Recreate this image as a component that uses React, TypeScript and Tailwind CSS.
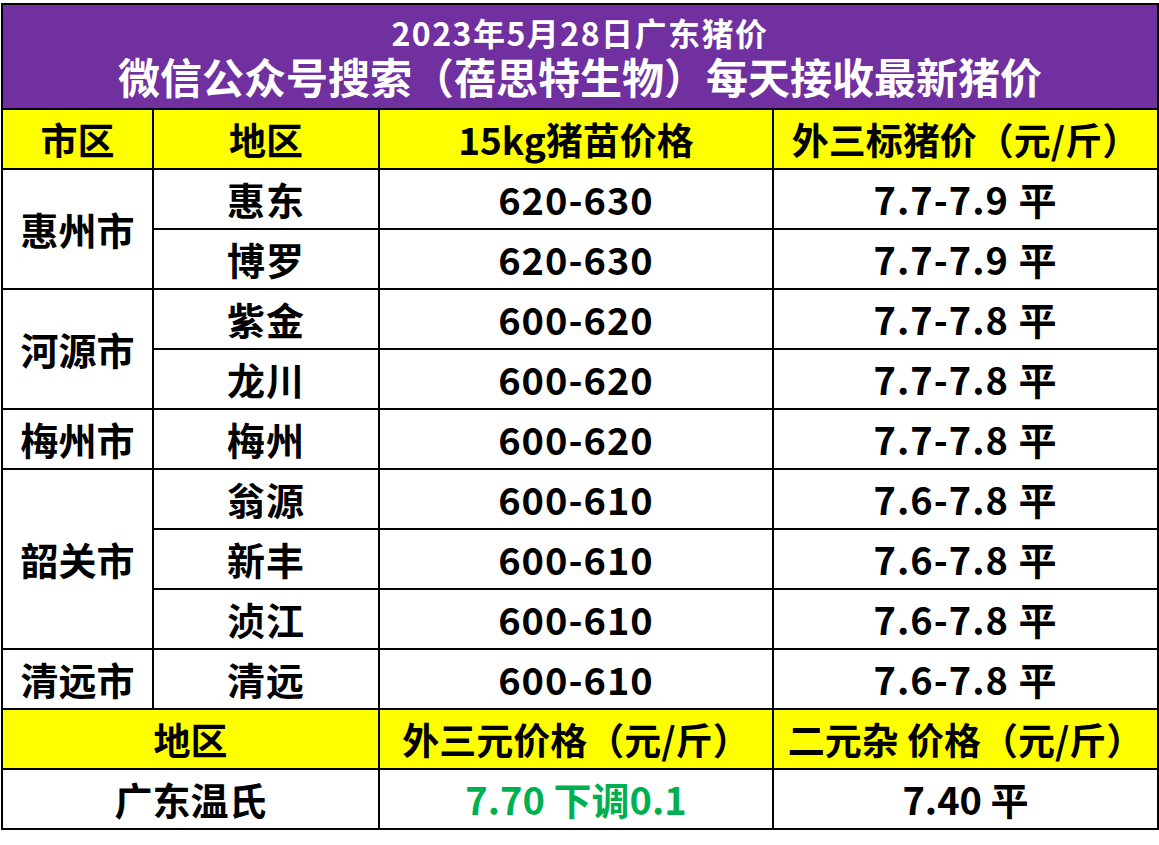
import React from "react";

const font = { fontFamily: '"Noto Sans CJK SC", "Noto Sans", sans-serif' };

const rows: { city?: string; span?: number; area: string; seed: string; price: string }[] = [
  { city: "惠州市", span: 2, area: "惠东", seed: "620-630", price: "7.7-7.9 平" },
  { area: "博罗", seed: "620-630", price: "7.7-7.9 平" },
  { city: "河源市", span: 2, area: "紫金", seed: "600-620", price: "7.7-7.8 平" },
  { area: "龙川", seed: "600-620", price: "7.7-7.8 平" },
  { city: "梅州市", span: 1, area: "梅州", seed: "600-620", price: "7.7-7.8 平" },
  { city: "韶关市", span: 3, area: "翁源", seed: "600-610", price: "7.6-7.8 平" },
  { area: "新丰", seed: "600-610", price: "7.6-7.8 平" },
  { area: "浈江", seed: "600-610", price: "7.6-7.8 平" },
  { city: "清远市", span: 1, area: "清远", seed: "600-610", price: "7.6-7.8 平" },
];

const td = "border-2 border-black text-center align-middle p-0 leading-none";

export default function App() {
  return (
    <div className="w-[1159px] h-[845px] bg-white pt-[3px] pl-[1px]" style={font}>
      <table className="table-fixed border-collapse w-[1156px] font-bold text-black">
        <colgroup>
          <col className="w-[151px]" />
          <col className="w-[226px]" />
          <col className="w-[394px]" />
          <col className="w-[385px]" />
        </colgroup>
        <tbody>
          <tr className="h-[105px] bg-[#7030A0]">
            <td colSpan={4} className={td + " text-white"}>
              <div className="flex flex-col items-center">
                <div className="text-[32px] leading-[32px] tracking-[1.5px]">2023年5月28日广东猪价</div>
                <div className="text-[42px] leading-[44px] mt-[6px]">微信公众号搜索（蓓思特生物）每天接收最新猪价</div>
              </div>
            </td>
          </tr>
          <tr className="h-[60px] bg-[#FFFF00] text-[37px]">
            <td className={td}>市区</td>
            <td className={td}>地区</td>
            <td className={td}>15kg猪苗价格</td>
            <td className={td}>外三标猪价（元/斤）</td>
          </tr>
          {rows.map((r, i) => (
            <tr key={i} className="h-[60px] text-[38px]">
              {r.city && (
                <td rowSpan={r.span} className={td}>
                  {r.city}
                </td>
              )}
              <td className={td + " tracking-[1px]"}>{r.area}</td>
              <td className={td + " tracking-[1px]"}>{r.seed}</td>
              <td className={td + " tracking-[1px]"}>{r.price}</td>
            </tr>
          ))}
          <tr className="h-[60px] bg-[#FFFF00] text-[37px]">
            <td colSpan={2} className={td}>地区</td>
            <td className={td}>外三元价格（元/斤）</td>
            <td className={td}>二元杂 价格（元/斤）</td>
          </tr>
          <tr className="h-[60px] text-[38px]">
            <td colSpan={2} className={td}>广东温氏</td>
            <td className={td + " text-[#00B050]"}>7.70 下调0.1</td>
            <td className={td}>7.40 平</td>
          </tr>
        </tbody>
      </table>
    </div>
  );
}
